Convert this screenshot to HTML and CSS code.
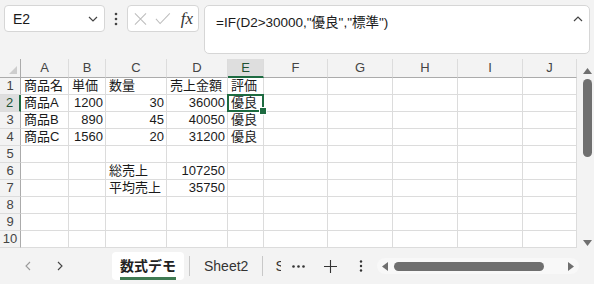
FILE: index.html
```html
<!DOCTYPE html>
<html lang="ja">
<head>
  <meta charset="UTF-8" />
  <title>数式デモ - Book</title>
  <link rel="stylesheet" href="styles.css">
</head>
<body>
  <div class="toolbar">
    <div class="namebox">
      <span>E2</span>
      <svg width="10" height="6" viewBox="0 0 10 6"><polyline points="1,1 5,5 9,1" fill="none" stroke="#444" stroke-width="1.2"/></svg>
    </div>
    <div class="kebab">
      <svg width="4" height="14" viewBox="0 0 4 14"><circle cx="2" cy="2" r="1.3" fill="#444"/><circle cx="2" cy="7" r="1.3" fill="#444"/><circle cx="2" cy="12" r="1.3" fill="#444"/></svg>
    </div>
    <div class="fxbox">
      <svg width="14" height="14" viewBox="0 0 14 14"><path d="M1 1 L13 13 M13 1 L1 13" stroke="#bdbdbd" stroke-width="1.1" fill="none"/></svg>
      <svg width="17" height="13" viewBox="0 0 17 13"><polyline points="1,7 5.5,12 16,1" stroke="#bdbdbd" stroke-width="1.1" fill="none"/></svg>
      <span class="fx">fx</span>
    </div>
    <div class="formula">
      <span>=IF(D2&gt;30000,"優良","標準")</span>
      <svg width="10" height="6" viewBox="0 0 10 6"><polyline points="1,5 5,1 9,5" fill="none" stroke="#444" stroke-width="1.2"/></svg>
    </div>
  </div>

  <div class="sheet">
    <div class="grid">
      <div class="corner"><span class="tri"></span></div>
      <div class="colhead">A</div>
      <div class="colhead">B</div>
      <div class="colhead">C</div>
      <div class="colhead">D</div>
      <div class="colhead sel">E</div>
      <div class="colhead">F</div>
      <div class="colhead">G</div>
      <div class="colhead">H</div>
      <div class="colhead">I</div>
      <div class="colhead">J</div>

      <div class="rowhead">1</div>
      <div class="cell">商品名</div><div class="cell">単価</div><div class="cell">数量</div><div class="cell">売上金額</div><div class="cell">評価</div>
      <div class="cell"></div><div class="cell"></div><div class="cell"></div><div class="cell"></div><div class="cell"></div>

      <div class="rowhead sel">2</div>
      <div class="cell">商品A</div><div class="cell num">1200</div><div class="cell num">30</div><div class="cell num">36000</div><div class="cell active-cell">優良</div>
      <div class="cell"></div><div class="cell"></div><div class="cell"></div><div class="cell"></div><div class="cell"></div>

      <div class="rowhead">3</div>
      <div class="cell">商品B</div><div class="cell num">890</div><div class="cell num">45</div><div class="cell num">40050</div><div class="cell">優良</div>
      <div class="cell"></div><div class="cell"></div><div class="cell"></div><div class="cell"></div><div class="cell"></div>

      <div class="rowhead">4</div>
      <div class="cell">商品C</div><div class="cell num">1560</div><div class="cell num">20</div><div class="cell num">31200</div><div class="cell">優良</div>
      <div class="cell"></div><div class="cell"></div><div class="cell"></div><div class="cell"></div><div class="cell"></div>

      <div class="rowhead">5</div>
      <div class="cell"></div><div class="cell"></div><div class="cell"></div><div class="cell"></div><div class="cell"></div>
      <div class="cell"></div><div class="cell"></div><div class="cell"></div><div class="cell"></div><div class="cell"></div>

      <div class="rowhead">6</div>
      <div class="cell"></div><div class="cell"></div><div class="cell">総売上</div><div class="cell num">107250</div><div class="cell"></div>
      <div class="cell"></div><div class="cell"></div><div class="cell"></div><div class="cell"></div><div class="cell"></div>

      <div class="rowhead">7</div>
      <div class="cell"></div><div class="cell"></div><div class="cell">平均売上</div><div class="cell num">35750</div><div class="cell"></div>
      <div class="cell"></div><div class="cell"></div><div class="cell"></div><div class="cell"></div><div class="cell"></div>

      <div class="rowhead">8</div>
      <div class="cell"></div><div class="cell"></div><div class="cell"></div><div class="cell"></div><div class="cell"></div>
      <div class="cell"></div><div class="cell"></div><div class="cell"></div><div class="cell"></div><div class="cell"></div>

      <div class="rowhead">9</div>
      <div class="cell"></div><div class="cell"></div><div class="cell"></div><div class="cell"></div><div class="cell"></div>
      <div class="cell"></div><div class="cell"></div><div class="cell"></div><div class="cell"></div><div class="cell"></div>

      <div class="rowhead">10</div>
      <div class="cell"></div><div class="cell"></div><div class="cell"></div><div class="cell"></div><div class="cell"></div>
      <div class="cell"></div><div class="cell"></div><div class="cell"></div><div class="cell"></div><div class="cell"></div>
    </div>

    <div class="vscroll">
      <svg class="arrow" width="9" height="6" viewBox="0 0 9 6"><polygon points="0,6 4.5,0 9,6" fill="#6f6f6f"/></svg>
      <div class="vthumb"></div>
      <svg class="arrow down" width="9" height="6" viewBox="0 0 9 6"><polygon points="0,0 4.5,6 9,0" fill="#6f6f6f"/></svg>
    </div>
  </div>

  <div class="tabbar">
    <div class="nav">
      <svg width="6" height="10" viewBox="0 0 6 10"><polyline points="5,1 1,5 5,9" fill="none" stroke="#9a9a9a" stroke-width="1.1"/></svg>
      <svg width="6" height="10" viewBox="0 0 6 10"><polyline points="1,1 5,5 1,9" fill="none" stroke="#444" stroke-width="1.1"/></svg>
    </div>
    <div class="tabs">
      <div class="tab current"><span>数式デモ</span></div>
      <div class="sep"></div>
      <div class="tab">Sheet2</div>
      <div class="sep"></div>
      <div class="tab last">Sheet3</div>
    </div>
    <div class="more">
      <svg width="13" height="3" viewBox="0 0 13 3"><circle cx="1.5" cy="1.5" r="1.3" fill="#333"/><circle cx="6.5" cy="1.5" r="1.3" fill="#333"/><circle cx="11.5" cy="1.5" r="1.3" fill="#333"/></svg>
    </div>
    <div class="add">
      <svg width="13" height="13" viewBox="0 0 13 13"><path d="M6.5 0 V13 M0 6.5 H13" stroke="#333" stroke-width="1.1"/></svg>
    </div>
    <div class="kebab2">
      <svg width="4" height="12" viewBox="0 0 4 12"><circle cx="2" cy="1.5" r="1.2" fill="#333"/><circle cx="2" cy="6" r="1.2" fill="#333"/><circle cx="2" cy="10.5" r="1.2" fill="#333"/></svg>
    </div>
    <div class="hscroll">
      <svg width="6" height="9" viewBox="0 0 6 9"><polygon points="6,0 0,4.5 6,9" fill="#6f6f6f"/></svg>
      <div class="hthumb"></div>
      <svg class="right" width="6" height="9" viewBox="0 0 6 9"><polygon points="0,0 6,4.5 0,9" fill="#6f6f6f"/></svg>
    </div>
  </div>
</body>
</html>
```

FILE: styles.css
```css
* {
  box-sizing: border-box;
}
body {
  margin: 0;
  width: 594px;
  height: 284px;
  overflow: hidden;
  background-color: #f3f3f3;
  font-family: "Liberation Sans", "Noto Sans CJK JP", sans-serif;
  font-size: 13px;
  color: #1a1a1a;
}

/* formula toolbar */
.toolbar {
  height: 59px;
  display: flex;
  align-items: flex-start;
  padding: 5px 4px 0;
}
.namebox {
  width: 101px;
  height: 27px;
  background: white;
  border: 1px solid #d6d6d6;
  border-radius: 4px;
  display: flex;
  align-items: center;
  justify-content: space-between;
  padding: 0 6px 0 8px;
  font-size: 14px;
}
.kebab {
  width: 22px;
  height: 27px;
  display: flex;
  align-items: center;
  justify-content: center;
}
.fxbox {
  width: 72px;
  height: 27px;
  background: white;
  border: 1px solid #d6d6d6;
  border-radius: 4px;
  display: flex;
  align-items: center;
  gap: 8px;
  padding: 0 5px 0 6px;
}
.fx {
  font-family: "Liberation Serif", serif;
  font-style: italic;
  font-size: 17px;
  color: #333;
  margin-left: 2px;
}
.formula {
  margin-left: 5px;
  width: 386px;
  height: 49px;
  background: white;
  border: 1px solid #d6d6d6;
  border-radius: 5px;
  display: flex;
  align-items: flex-start;
  justify-content: space-between;
  padding: 5px 6px 0 11px;
  font-size: 13.5px;
}
.formula svg {
  margin-top: 5px;
}

/* grid */
.sheet {
  height: 189px;
  display: flex;
}
.grid {
  display: grid;
  grid-template-columns: 21px 48px 37px 61px 61px 36px 64px 65px 65px 65px 54px;
  grid-auto-rows: 17px;
  grid-template-rows: 19px;
  background: white;
}
.corner {
  position: relative;
  background: #f3f3f3;
  border-right: 1px solid #ababab;
  border-bottom: 1px solid #ababab;
}
.tri {
  position: absolute;
  right: 3px;
  bottom: 3px;
  width: 0;
  height: 0;
  border-left: 8px solid transparent;
  border-bottom: 8px solid #cdcdcd;
}
.colhead {
  background: #f3f3f3;
  border-right: 1px solid #dcdcdc;
  border-bottom: 1px solid #ababab;
  text-align: center;
  line-height: 18px;
  color: #444;
}
.colhead.sel {
  background: #dedede;
  border-bottom: 2px solid #1e6b41;
  color: #1e5132;
}
.rowhead {
  background: #f3f3f3;
  border-right: 1px solid #ababab;
  border-bottom: 1px solid #dcdcdc;
  text-align: center;
  line-height: 16px;
  color: #444;
}
.rowhead.sel {
  background: #dedede;
  border-right: 2px solid #1e6b41;
  color: #1e5132;
}
.cell {
  border-right: 1px solid #dcdcdc;
  border-bottom: 1px solid #dcdcdc;
  padding: 0 2px 0 3px;
  line-height: 16px;
  white-space: nowrap;
}
.num {
  text-align: right;
}
.active-cell {
  position: relative;
  z-index: 1;
}
.active-cell::before {
  content: "";
  position: absolute;
  top: -1px;
  left: -1px;
  right: -1px;
  bottom: -1px;
  border: 2px solid #1e6b41;
}
.active-cell::after {
  content: "";
  position: absolute;
  right: -4px;
  bottom: -4px;
  width: 6px;
  height: 6px;
  background: #1e6b41;
  border: 1px solid white;
}

.vscroll {
  width: 17px;
  display: flex;
  flex-direction: column;
  align-items: center;
  padding: 9px 0 2px 4px;
}
.vthumb {
  width: 9px;
  height: 78px;
  margin-top: 5px;
  background: #6f6f6f;
  border-radius: 5px;
}
.vscroll .down {
  margin-top: auto;
}

/* sheet tabs */
.tabbar {
  height: 36px;
  display: flex;
  align-items: center;
}
.nav {
  width: 112px;
  display: flex;
  gap: 26px;
  padding-left: 25px;
}
.tabs {
  width: 169px;
  display: flex;
  align-items: center;
  overflow: hidden;
  font-size: 14px;
  color: #333;
}
.tab {
  flex-shrink: 0;
  height: 28px;
  padding: 0 9px 0 14px;
  line-height: 28px;
}
.tab.last {
  padding-left: 12px;
}
.tab.current {
  background: white;
  border-radius: 4px;
  padding: 0 8px;
  font-weight: bold;
  color: #222;
}
.tab.current span {
  display: inline-block;
  line-height: 21px;
  border-bottom: 3px solid #3f7a52;
}
.sep {
  flex-shrink: 0;
  width: 1px;
  height: 20px;
  margin-left: 5px;
  background: #c8c8c8;
}
.more {
  width: 30px;
  display: flex;
  justify-content: center;
  margin-left: 2px;
}
.add {
  width: 34px;
  display: flex;
  justify-content: center;
}
.kebab2 {
  width: 28px;
  display: flex;
  justify-content: center;
}
.hscroll {
  width: 202px;
  height: 16px;
  margin-left: 2px;
  background: #f8f8f8;
  border-radius: 8px;
  display: flex;
  align-items: center;
  padding: 0 5px;
}
.hthumb {
  width: 150px;
  height: 9px;
  margin-left: 6px;
  background: #6f6f6f;
  border-radius: 5px;
}
.hscroll .right {
  margin-left: auto;
}
```
